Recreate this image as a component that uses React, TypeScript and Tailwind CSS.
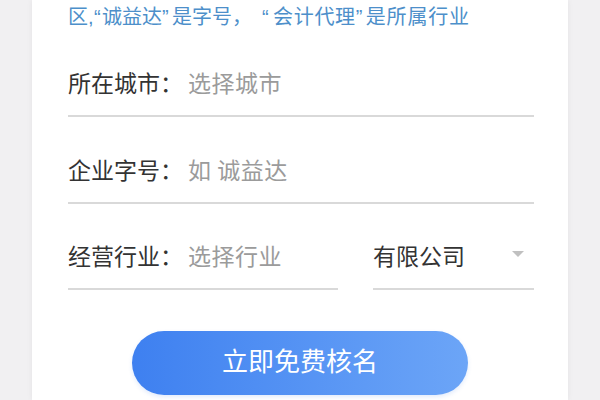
import React from "react";

const font = { fontFamily: '"Noto Sans CJK SC", "Noto Sans", sans-serif' };
const latin = { fontFamily: '"Liberation Sans", Arial, sans-serif' };

function Q({ c, w }: { c: string; w: string }) {
  return (
    <span className={`inline-block ${w}`} style={latin}>
      {c}
    </span>
  );
}

export default function App() {
  return (
    <div className="w-[600px] h-[400px] overflow-hidden bg-[#f1f0f2]" style={font}>
      <div className="ml-[32px] w-[536px] h-full bg-white shadow-[0_0_6px_rgba(0,0,0,0.06)] pl-[36px] pr-[34px] flex flex-col">
        <div className="pt-[4px] text-[20px] leading-[24px] text-[#4d8fca] whitespace-nowrap">
          <span>区</span>
          <Q c="," w="w-[6px]" />
          <Q c="“" w="w-[8px]" />
          <span>诚益达</span>
          <Q c="”" w="w-[10px]" />
          <span>是字号，</span>
          <span className="inline-block ml-[10px]" />
          <Q c="“" w="w-[11px]" />
          <span className="tracking-[0.7px]">会计代理</span>
          <Q c="”" w="w-[10px]" />
          <span className="tracking-[0.8px]">是所属行业</span>
        </div>

        <div className="mt-[38px] flex items-center pb-[18px] border-b-2 border-[#d9d9d9]">
          <span className="text-[23px] leading-[30px] text-[#333333]">所在城市：</span>
          <span className="ml-[5px] text-[23px] leading-[30px] tracking-[0.5px] text-[#9b9b9b]">选择城市</span>
        </div>

        <div className="mt-[37px] flex items-center pb-[18px] border-b-2 border-[#d9d9d9]">
          <span className="text-[23px] leading-[30px] text-[#333333]">企业字号：</span>
          <span className="ml-[5px] text-[23px] leading-[30px] tracking-[0.5px] text-[#9b9b9b]">如 诚益达</span>
        </div>

        <div className="mt-[36px] flex gap-[35px]">
          <div className="w-[270px] flex items-center pb-[18px] border-b-2 border-[#d9d9d9]">
            <span className="text-[23px] leading-[30px] text-[#333333]">经营行业：</span>
            <span className="ml-[5px] text-[23px] leading-[30px] tracking-[0.5px] text-[#9b9b9b]">选择行业</span>
          </div>
          <div className="flex-1 flex items-center justify-between pb-[18px] border-b-2 border-[#d9d9d9]">
            <span className="text-[23px] leading-[30px] text-[#333333]">有限公司</span>
            <svg width="12" height="6" viewBox="0 0 12 6" className="mr-[10px] -mt-[2px]">
              <polygon points="0,0 12,0 6,6" fill="#c0c0c0" />
            </svg>
          </div>
        </div>

        <button className="mt-[41px] ml-[64px] w-[336px] h-[64px] pb-[6px] rounded-full bg-gradient-to-r from-[#3e80f0] to-[#6ca5f7] text-white text-[26px] leading-[30px] flex items-center justify-center shadow-[0_2px_4px_rgba(60,120,230,0.15)]">
          立即免费核名
        </button>
      </div>
    </div>
  );
}
